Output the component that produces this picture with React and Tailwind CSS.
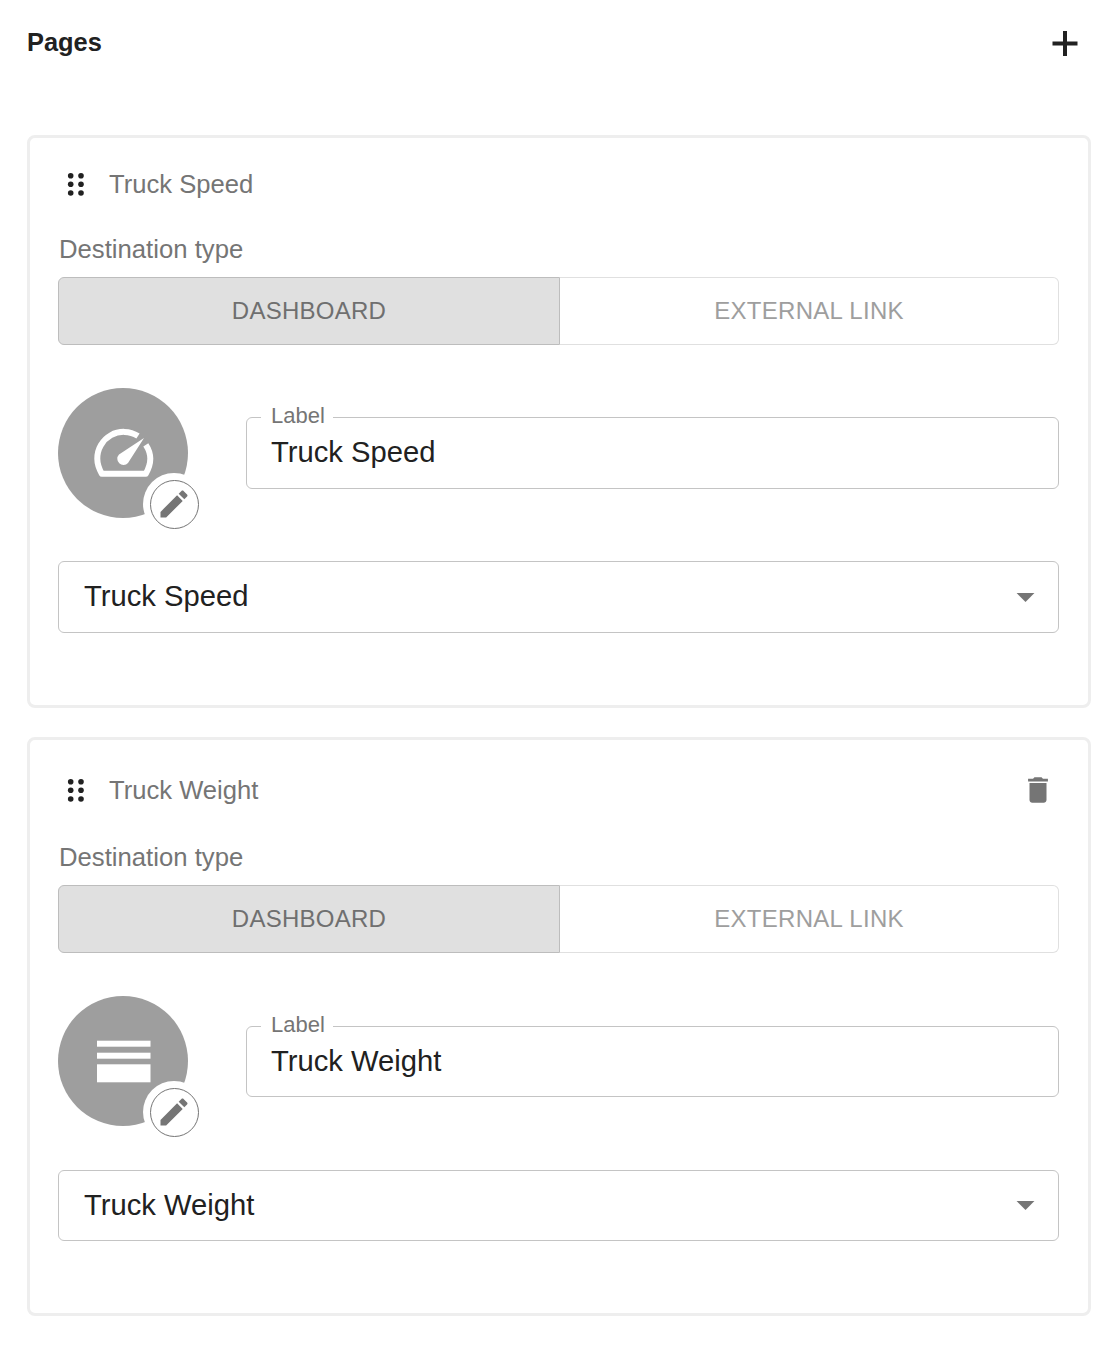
import React from 'react';

const EditIcon = ({ className }) => (
  <svg viewBox="0 0 24 24" className={className} fill="currentColor">
    <path d="M3 17.25V21h3.75L17.81 9.94l-3.75-3.75L3 17.25zM20.71 7.04c.39-.39.39-1.02 0-1.41l-2.34-2.34c-.39-.39-1.02-.39-1.41 0l-1.83 1.83 3.75 3.75 1.83-1.83z" />
  </svg>
);

const DragHandle = () => (
  <svg viewBox="0 0 18 24" className="w-[18px] h-[24px] text-[#212121]" fill="currentColor">
    <circle cx="3.7" cy="3.7" r="2.8" />
    <circle cx="14" cy="3.7" r="2.8" />
    <circle cx="3.7" cy="12.2" r="2.8" />
    <circle cx="14" cy="12.2" r="2.8" />
    <circle cx="3.7" cy="21" r="2.8" />
    <circle cx="14" cy="21" r="2.8" />
  </svg>
);

const GaugeGlyph = () => (
  <svg viewBox="0 0 130 130" className="w-[130px] h-[130px] text-white">
    <path
      d="M80 48A26.5 26.5 0 0 0 39.3 70.8c0 5 1.7 10 4.5 14.9H87.8c2.8-4.9 4.5-9.9 4.5-14.9 0-5-1.7-9.8-4.5-14"
      fill="none"
      stroke="currentColor"
      strokeWidth="6"
      strokeLinejoin="round"
    />
    <path d="M86 50L70 75a6 6 0 1 1-9-8.5z" fill="currentColor" />
  </svg>
);

const RowsGlyph = () => (
  <svg viewBox="0 0 130 130" className="w-[130px] h-[130px] text-white" fill="currentColor">
    <rect x="39" y="44.7" width="53.5" height="6" />
    <rect x="39" y="56.7" width="53.5" height="6" />
    <rect x="39" y="68.3" width="53.5" height="18" />
  </svg>
);

const Avatar = ({ children }) => (
  <div className="relative w-[130px] h-[130px] shrink-0 rounded-full bg-[#9e9e9e]">
    {children}
    <div className="absolute left-[85px] top-[85px] w-[62px] h-[62px] rounded-full bg-white flex items-center justify-center">
      <div className="w-[49px] h-[49px] rounded-full border border-[#757575] bg-white flex items-center justify-center text-[#757575]">
        <EditIcon className="w-[36px] h-[36px]" />
      </div>
    </div>
  </div>
);

const PageCard = ({ title, glyph, deletable, cardClass, headerClass, labelClass, toggleClass, fieldClass, selectClass }) => (
  <div className={`border-[3px] border-[#eeeeee] rounded-lg pl-[28px] pr-[29px] pb-[72px] ${cardClass}`}>
    <div className={`flex items-center h-[36px] ${headerClass}`}>
      <div className="ml-[9px] mr-[24px] flex">
        <DragHandle />
      </div>
      <span className="flex-1 text-[25.6px] text-[#757575]">{title}</span>
      {deletable && (
        <svg viewBox="0 0 24 24" className="w-[34px] h-[34px] mr-[4px] text-[#757575]" fill="currentColor">
          <path d="M6 19c0 1.1.9 2 2 2h8c1.1 0 2-.9 2-2V7H6v12zM19 4h-3.5l-1-1h-5l-1 1H5v2h14V4z" />
        </svg>
      )}
    </div>

    <div className={`h-[24px] leading-[24px] pl-[1px] text-[25.7px] text-[#757575] ${labelClass}`}>Destination type</div>

    <div className={`flex h-[68px] ${toggleClass}`}>
      <div className="w-[502px] flex items-center justify-center pb-[1px] rounded-l-md border border-[#bdbdbd] bg-[#e0e0e0] text-[24px] tracking-[0.25px] text-[#6f6f6f]">
        DASHBOARD
      </div>
      <div className="flex-1 flex items-center justify-center pb-[1px] rounded-r-md border border-l-0 border-[#e0e0e0] text-[24px] tracking-[0.3px] text-[#9e9e9e]">
        EXTERNAL LINK
      </div>
    </div>

    <div className="flex items-center gap-[58px] mt-[43px]">
      <Avatar>{glyph}</Avatar>
      <div className={`relative flex-1 flex items-center pl-[24px] rounded-md border border-[#c4c4c4] text-[29.2px] text-[#212121] ${fieldClass}`}>
        <span className="absolute left-[14px] -top-[15px] bg-white pl-[10px] pr-[8px] text-[22px] leading-[26px] text-[#757575]">Label</span>
        {title}
      </div>
    </div>

    <div className={`flex items-center justify-between pl-[25px] pr-[11px] rounded-md border border-[#c4c4c4] text-[29.2px] text-[#212121] ${selectClass}`}>
      {title}
      <svg viewBox="0 0 24 24" className="w-[43px] h-[43px] -translate-y-[1px] text-[#757575]" fill="currentColor">
        <path d="M7 10l5 5 5-5z" />
      </svg>
    </div>
  </div>
);

const App = () => {
  return (
    <div className="w-[1116px] h-[1348px] bg-white pl-[27px] pr-[25px] pt-[25px] font-['Liberation_Sans',Arial,sans-serif]">
      <div className="flex items-center justify-between h-[36px]">
        <h1 className="text-[25.4px] font-bold text-[#212121] pb-[2px]">Pages</h1>
        <svg viewBox="0 0 26 26" className="w-[26px] h-[26px] mr-[13px] text-[#212121]" fill="currentColor">
          <rect x="0.5" y="11.5" width="25" height="4" />
          <rect x="11" y="1" width="4" height="25" />
        </svg>
      </div>

      <div className="flex flex-col gap-[29px] mt-[74px]">
        <PageCard
          title="Truck Speed"
          glyph={<GaugeGlyph />}
          cardClass="h-[573px]"
          headerClass="mt-[28px]"
          labelClass="mt-[35px]"
          toggleClass="mt-[16px]"
          fieldClass="h-[72px]"
          selectClass="h-[72px] mt-[43px]"
        />
        <PageCard
          title="Truck Weight"
          glyph={<RowsGlyph />}
          deletable
          cardClass="h-[579px]"
          headerClass="mt-[32px]"
          labelClass="mt-[37px]"
          toggleClass="mt-[16px]"
          fieldClass="h-[71px] pt-[2px]"
          selectClass="h-[71px] mt-[44px]"
        />
      </div>
    </div>
  );
};

export default App;
